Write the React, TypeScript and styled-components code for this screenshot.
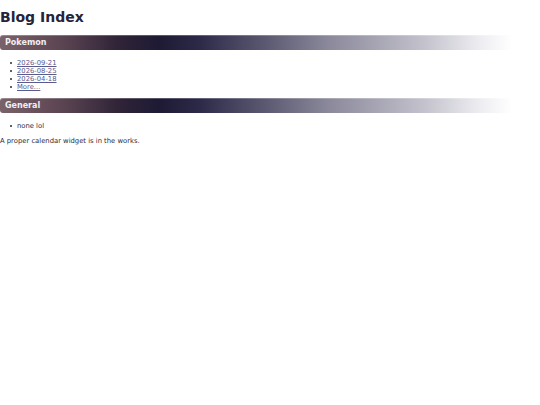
import React from 'react'
import styled, { createGlobalStyle } from 'styled-components'

const GlobalStyle = createGlobalStyle`
	html, body {
		margin: 0;
		padding: 0;
		background: #ffffff;
	}
	body {
		font-family: 'DejaVu Sans', Verdana, sans-serif;
		font-size: 6.8px;
		color: #2b2b3a;
	}
`

const sections = [
	{
		title: 'Pokemon',
		posts: ['2026-09-21', '2026-08-25', '2026-04-18'],
		more: true,
	},
	{
		title: 'General',
		posts: [],
		more: false,
	},
]

const App: React.FC = () => {
	return (
		<>
			<GlobalStyle />
			<Page>
				<Title>Blog Index</Title>
				{sections.map((section) => (
					<Section key={section.title}>
						<SectionHeader>{section.title}</SectionHeader>
						<PostList>
							{section.posts.length === 0 && <PostItem>none lol</PostItem>}
							{section.posts.map((post) => (
								<PostItem key={post}>
									<PostLink href="#">{post}</PostLink>
								</PostItem>
							))}
							{section.more && (
								<PostItem>
									<PostLink href="#">More...</PostLink>
								</PostItem>
							)}
						</PostList>
					</Section>
				))}
				<Note>A proper calendar widget is in the works.</Note>
			</Page>
		</>
	)
}

const Page = styled.div`
	width: 540px;
	padding-top: 9px;
`

const Title = styled.h1`
	margin: 0 0 10px;
	font-size: 14px;
	line-height: 16px;
	font-weight: bold;
	color: #24243a;
`

const Section = styled.section`
	display: flex;
	flex-direction: column;
`

const SectionHeader = styled.h2`
	box-sizing: border-box;
	width: 512px;
	height: 15px;
	margin: 0;
	padding: 0 5px;
	font-size: 8px;
	line-height: 15px;
	font-weight: bold;
	color: #f2eef2;
	border-radius: 3px 0 0 3px;
	box-shadow: inset 0 1px 0 rgba(255, 255, 255, 0.25);
	background: linear-gradient(
		to right,
		#7a626a 0%,
		#5c4552 12%,
		#302438 23%,
		#1e1a34 31%,
		#2c2a48 39%,
		#5c5a72 52%,
		#8a889a 64%,
		#c0bfca 82%,
		#eeeef2 94%,
		rgba(255, 255, 255, 0) 100%
	);
`

const PostList = styled.ul`
	display: flex;
	flex-direction: column;
	margin: 9px 0 7px;
	padding-left: 10px;
	list-style: none;
`

const PostItem = styled.li`
	display: flex;
	align-items: center;
	line-height: 8px;

	&::before {
		content: '';
		width: 2px;
		height: 2px;
		margin-right: 5px;
		border-radius: 1px;
		background: #2b2b3a;
	}
`

const PostLink = styled.a`
	color: #5a5a8c;
	text-decoration: underline;
`

const Note = styled.p`
	margin: 0;
	line-height: 8px;
`

export default App
